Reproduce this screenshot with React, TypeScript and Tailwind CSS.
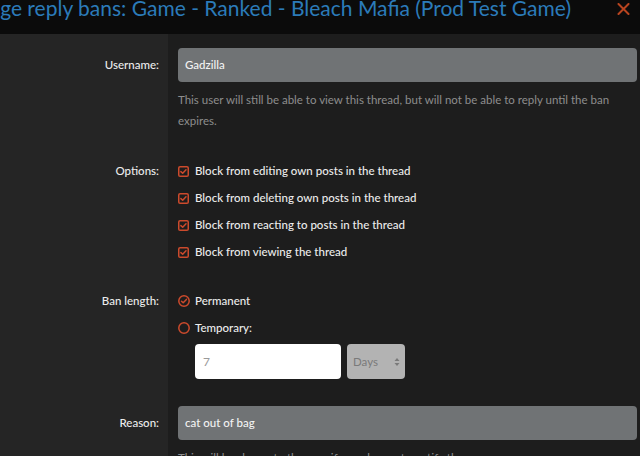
import React from "react";

function CheckBox() {
  return (
    <svg width="11" height="11" viewBox="0 0 11 11" className="shrink-0">
      <rect x="0.75" y="0.75" width="9.5" height="9.5" rx="1.3" fill="none" stroke="#cc4a2c" strokeWidth="1.5" />
      <path d="M2.9 5.6 L4.7 7.3 L8 3.8" fill="none" stroke="#cc4a2c" strokeWidth="1.5" strokeLinecap="round" strokeLinejoin="round" />
    </svg>
  );
}

function Radio({ checked }: { checked: boolean }) {
  return (
    <svg width="12" height="12" viewBox="0 0 12 12" className="shrink-0">
      <circle cx="6" cy="6" r="5.2" fill="none" stroke="#cc4a2c" strokeWidth="1.5" />
      {checked && (
        <path d="M3.5 6.2 L5.2 7.8 L8.4 4.4" fill="none" stroke="#cc4a2c" strokeWidth="1.5" strokeLinecap="round" strokeLinejoin="round" />
      )}
    </svg>
  );
}

function Row({ label, children, labelClass = "" }: { label: string; children: React.ReactNode; labelClass?: string }) {
  return (
    <div className="flex">
      <div className={"w-[168px] shrink-0 pr-[9px] text-right text-[11.5px] font-medium text-[#ececec] " + labelClass}>{label}</div>
      <div className="flex-1 min-w-0 pl-[10px] pr-[3px]">{children}</div>
    </div>
  );
}

export default function App() {
  const opts = [
    "Block from editing own posts in the thread",
    "Block from deleting own posts in the thread",
    "Block from reacting to posts in the thread",
    "Block from viewing the thread",
  ];
  return (
    <div className="w-[640px] h-[456px] overflow-hidden bg-[#1d1d1d] flex flex-col" style={{ fontFamily: "Lato, 'Noto Sans', sans-serif" }}>
      <div className="h-[34px] shrink-0 bg-[#0b0b0b] flex items-start overflow-hidden">
        <div className="flex-1 min-w-0 flex justify-end overflow-hidden">
          <div className="whitespace-nowrap text-[21px] leading-[24px] -mt-[4px] text-[#2b7bb9]">
            Manage reply bans: Game - Ranked - Bleach Mafia (Prod Test Game)
          </div>
        </div>
        <div className="w-[69px] shrink-0 flex justify-end pr-[10px] pt-[3px]">
          <svg width="13" height="12" viewBox="0 0 13 12">
            <path d="M1.5 1 L11.5 11 M11.5 1 L1.5 11" stroke="#b8441f" strokeWidth="2" strokeLinecap="round" />
          </svg>
        </div>
      </div>
      <div className="flex-1 bg-[linear-gradient(to_right,#252525_168px,#1d1d1d_168px)] pt-[14px]">
        <Row label="Username:" labelClass="leading-[34px]">
          <div className="h-[34px] rounded-[4px] bg-[#707375] px-[7px] flex items-center text-[11.5px] font-medium text-[#f2f2f2]">Gadzilla</div>
          <div className="mt-[7px] text-[11.5px] leading-[21px] text-[#8d8d8d]">
            This user will still be able to view this thread, but will not be able to reply until the ban expires.
          </div>
        </Row>
        <div className="h-[30px]" />
        <Row label="Options:" labelClass="leading-[20px]">
          <div className="flex flex-col gap-[7px]">
            {opts.map((o) => (
              <div key={o} className="flex items-center gap-[6px] h-[20px] text-[11.5px] font-medium text-[#ececec]">
                <CheckBox />
                <span>{o}</span>
              </div>
            ))}
          </div>
        </Row>
        <div className="h-[29px]" />
        <Row label="Ban length:" labelClass="leading-[20px]">
          <div className="flex flex-col gap-[7px]">
            <div className="flex items-center gap-[5px] h-[20px] text-[11.5px] font-medium text-[#ececec]">
              <Radio checked />
              <span>Permanent</span>
            </div>
            <div className="flex items-center gap-[5px] h-[20px] text-[11.5px] font-medium text-[#ececec]">
              <Radio checked={false} />
              <span>Temporary:</span>
            </div>
          </div>
          <div className="mt-[6px] pl-[17px] flex gap-[6px]">
            <div className="w-[146px] h-[35px] rounded-[4px] bg-white px-[8px] flex items-center text-[12px] text-[#9a9a9a]">7</div>
            <div className="w-[58px] h-[35px] rounded-[4px] bg-[#b3b3b3] pl-[6px] pr-[5px] flex items-center justify-between text-[11.5px] text-[#7a7a7a]">
              <span>Days</span>
              <svg width="6" height="10" viewBox="0 0 6 10">
                <path d="M0.5 4 L3 1 L5.5 4 Z M0.5 6 L3 9 L5.5 6 Z" fill="#7a7a7a" />
              </svg>
            </div>
          </div>
        </Row>
        <div className="h-[27px]" />
        <Row label="Reason:" labelClass="leading-[34px]">
          <div className="h-[34px] rounded-[4px] bg-[#707375] px-[7px] flex items-center text-[11.5px] font-medium text-[#f2f2f2]">cat out of bag</div>
          <div className="mt-[7px] text-[11.5px] leading-[21px] text-[#8d8d8d]">
            This will be shown to the user if you choose to notify them.
          </div>
        </Row>
      </div>
    </div>
  );
}
